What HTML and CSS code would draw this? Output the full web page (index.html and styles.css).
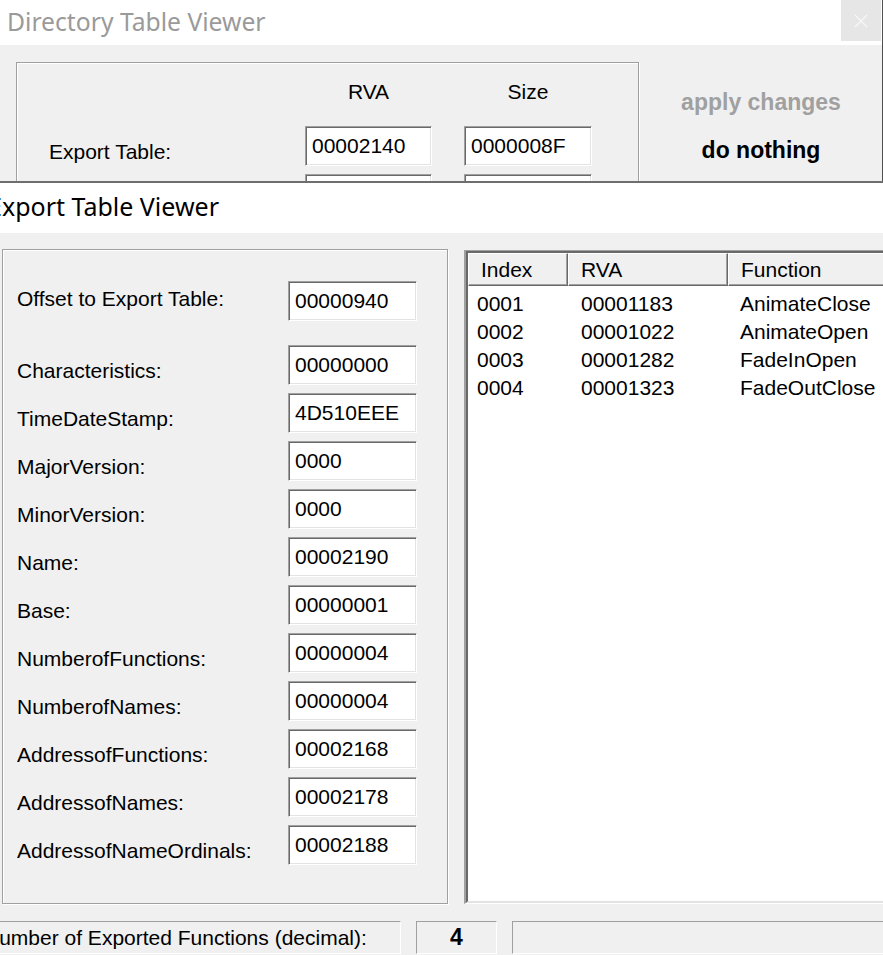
FILE: index.html
```html
<!DOCTYPE html>
<html>
<head>
<meta charset="utf-8">
<link rel="stylesheet" href="styles.css">
</head>
<body>
<div class="back">
  <div class="titlebar back-title">
    <span class="title-text">Directory Table Viewer</span>
    <div class="close"><svg width="14" height="14" viewBox="0 0 14 14"><path d="M1 1L13 13M13 1L1 13" stroke="#f8f8f8" stroke-width="1.2" fill="none"/></svg></div>
  </div>
  <div class="back-client">
    <div class="group back-group">
      <div class="dir-grid">
        <div></div><div class="colhead">RVA</div><div class="colhead">Size</div>
        <div class="label dir-label">Export Table:</div><div class="field">00002140</div><div class="field">0000008F</div>
        <div class="label dir-label"></div><div class="field"></div><div class="field"></div>
      </div>
    </div>
    <div class="actions">
      <button class="flatbtn disabled">apply changes</button>
      <button class="flatbtn">do nothing</button>
    </div>
  </div>
</div>
<div class="front">
  <div class="titlebar front-title"><span class="title-text">Export Table Viewer</span></div>
  <div class="front-client">
    <div class="main-row">
      <div class="group front-group">
        <div class="form-grid">
          <div class="label first">Offset to Export Table:</div><div class="field">00000940</div>
          <div class="label">Characteristics:</div><div class="field">00000000</div>
          <div class="label">TimeDateStamp:</div><div class="field">4D510EEE</div>
          <div class="label">MajorVersion:</div><div class="field">0000</div>
          <div class="label">MinorVersion:</div><div class="field">0000</div>
          <div class="label">Name:</div><div class="field">00002190</div>
          <div class="label">Base:</div><div class="field">00000001</div>
          <div class="label">NumberofFunctions:</div><div class="field">00000004</div>
          <div class="label">NumberofNames:</div><div class="field">00000004</div>
          <div class="label">AddressofFunctions:</div><div class="field">00002168</div>
          <div class="label">AddressofNames:</div><div class="field">00002178</div>
          <div class="label">AddressofNameOrdinals:</div><div class="field">00002188</div>
        </div>
      </div>
      <div class="listview">
        <div class="lv-inner">
          <div class="lv-head">
            <div class="lv-col c1">Index</div>
            <div class="lv-col c2">RVA</div>
            <div class="lv-col c3">Function</div>
          </div>
          <div class="lv-body">
            <div class="lv-row"><span class="cell c1">0001</span><span class="cell c2">00001183</span><span class="cell c3">AnimateClose</span></div>
            <div class="lv-row"><span class="cell c1">0002</span><span class="cell c2">00001022</span><span class="cell c3">AnimateOpen</span></div>
            <div class="lv-row"><span class="cell c1">0003</span><span class="cell c2">00001282</span><span class="cell c3">FadeInOpen</span></div>
            <div class="lv-row"><span class="cell c1">0004</span><span class="cell c2">00001323</span><span class="cell c3">FadeOutClose</span></div>
          </div>
        </div>
      </div>
    </div>
    <div class="statusbar">
      <div class="panel p1">Number of Exported Functions (decimal):</div>
      <div class="panel p2">4</div>
      <div class="panel p3"></div>
    </div>
  </div>
</div>
</body>
</html>
```
FILE: styles.css
```css
html, body {
  margin: 0;
  padding: 0;
  background: #f0f0f0;
  overflow: hidden;
  width: 883px;
  height: 955px;
}
body {
  font-family: "Liberation Sans", Arial, sans-serif;
  font-size: 21px;
  color: #000;
}
.titlebar {
  background: #fff;
  display: flex;
  align-items: center;
  font-family: "Noto Sans", "Open Sans", sans-serif;
  font-size: 25px;
  white-space: nowrap;
}
.back {
  position: relative;
  height: 181px;
  width: 883px;
  box-sizing: border-box;
  border-right: 1px solid #505050;
  overflow: hidden;
}
.back-title {
  height: 45px;
  padding-left: 7px;
  color: #9a9a9a;
}
.back-title .title-text {
  padding-bottom: 3px;
  font-size: 24.7px;
}
.close {
  margin-left: auto;
  margin-right: 1px;
  align-self: flex-start;
  width: 40px;
  height: 41px;
  background: #e6e6e6;
  display: flex;
  align-items: center;
  justify-content: center;
}
.back-client {
  position: relative;
  height: 136px;
  padding: 17px 0 0 16px;
  display: flex;
  align-items: flex-start;
}
.back-client::after {
  content: "";
  position: absolute;
  left: 0;
  right: 0;
  bottom: 0;
  height: 16px;
  background: linear-gradient(rgba(0,0,0,0), rgba(0,0,0,0.12));
}
.group {
  flex: none;
  box-sizing: border-box;
  border: 1px solid #a0a0a0;
  box-shadow: inset 1px 1px 0 #fff, 1px 1px 0 #fff;
}
.back-group {
  width: 623px;
  height: 200px;
  padding: 14px 0 0 32px;
}
.dir-grid {
  display: grid;
  grid-template-columns: 224px 127px 128px;
  grid-template-rows: 41px;
  grid-auto-rows: 40px;
  column-gap: 32px;
  row-gap: 8px;
}
.colhead {
  text-align: center;
  line-height: 30px;
}
.dir-label {
  line-height: 40px;
  padding-top: 12px;
}
.field {
  box-sizing: border-box;
  height: 40px;
  background: #fff;
  border-style: solid;
  border-width: 1px;
  border-color: #a0a0a0 #fff #fff #a0a0a0;
  box-shadow: inset 1px 1px 0 #696969, inset -1px -1px 0 #e3e3e3;
  padding-left: 6px;
  line-height: 38px;
  white-space: nowrap;
}
.actions {
  margin-left: 22px;
  margin-top: 20px;
  display: flex;
  flex-direction: column;
  gap: 8px;
}
.flatbtn {
  width: 200px;
  height: 40px;
  background: transparent;
  border: none;
  padding: 0;
  font-family: "Liberation Sans", Arial, sans-serif;
  font-weight: bold;
  font-size: 23px;
  color: #000;
}
.flatbtn.disabled {
  color: #a0a0a0;
}
.front {
  border-top: 2px solid #6e6e6e;
  width: 883px;
  overflow: hidden;
}
.front-title {
  height: 50px;
  color: #000;
}
.front-title .title-text {
  margin-left: -12px;
  padding-bottom: 4px;
}
.front-client {
  background: #f0f0f0;
  padding-top: 16px;
  height: 723px;
  box-sizing: border-box;
}
.main-row {
  display: flex;
  align-items: flex-start;
}
.front-group {
  margin-left: 2px;
  width: 446px;
  height: 655px;
  padding: 31px 0 0 14px;
}
.form-grid {
  display: grid;
  grid-template-columns: 271px 129px;
  grid-template-rows: 56px;
  grid-auto-rows: 40px;
  row-gap: 8px;
}
.label {
  line-height: 40px;
  padding-top: 6px;
  white-space: nowrap;
}
.label.first {
  padding-top: 0;
  margin-top: -2px;
}
.listview {
  margin-left: 16px;
  margin-top: 1px;
  width: 440px;
  flex: none;
  height: 654px;
  box-sizing: border-box;
  border-style: solid;
  border-width: 1px 1px 1px 2px;
  border-color: #a0a0a0 #fff #fff #a0a0a0;
}
.lv-inner {
  height: 100%;
  box-sizing: border-box;
  background: #fff;
  border-style: solid;
  border-width: 2px;
  border-color: #696969 #e3e3e3 #e3e3e3 #696969;
}
.lv-head {
  display: flex;
  height: 33px;
}
.lv-col {
  box-sizing: border-box;
  height: 33px;
  background: #f0f0f0;
  border-style: solid;
  border-width: 1px;
  border-color: #fff #696969 #696969 #fff;
  box-shadow: inset -1px -1px 0 #a0a0a0;
  padding-left: 12px;
  line-height: 31px;
  white-space: nowrap;
}
.lv-col.c1 { width: 100px; }
.lv-col.c2 { width: 160px; }
.lv-col.c3 { flex: 1; }
.lv-body {
  padding-top: 4px;
}
.lv-row {
  display: flex;
  height: 28px;
  line-height: 28px;
  white-space: nowrap;
}
.cell.c1 { width: 100px; padding-left: 9px; box-sizing: border-box; }
.cell.c2 { width: 160px; padding-left: 13px; box-sizing: border-box; }
.cell.c3 { padding-left: 12px; }
.statusbar {
  display: flex;
  gap: 15px;
  margin-top: 17px;
}
.panel {
  box-sizing: border-box;
  height: 33px;
  border-style: solid;
  border-width: 1px;
  border-color: #a0a0a0 #fff #fff #a0a0a0;
  line-height: 31px;
  white-space: nowrap;
  overflow: hidden;
}
.p1 {
  flex: none;
  margin-left: -20px;
  width: 421px;
  padding-left: 3px;
}
.p2 {
  flex: none;
  width: 81px;
  text-align: center;
  font-weight: bold;
  font-size: 23px;
}
.p3 {
  flex: 1;
  margin-right: -20px;
}
```
